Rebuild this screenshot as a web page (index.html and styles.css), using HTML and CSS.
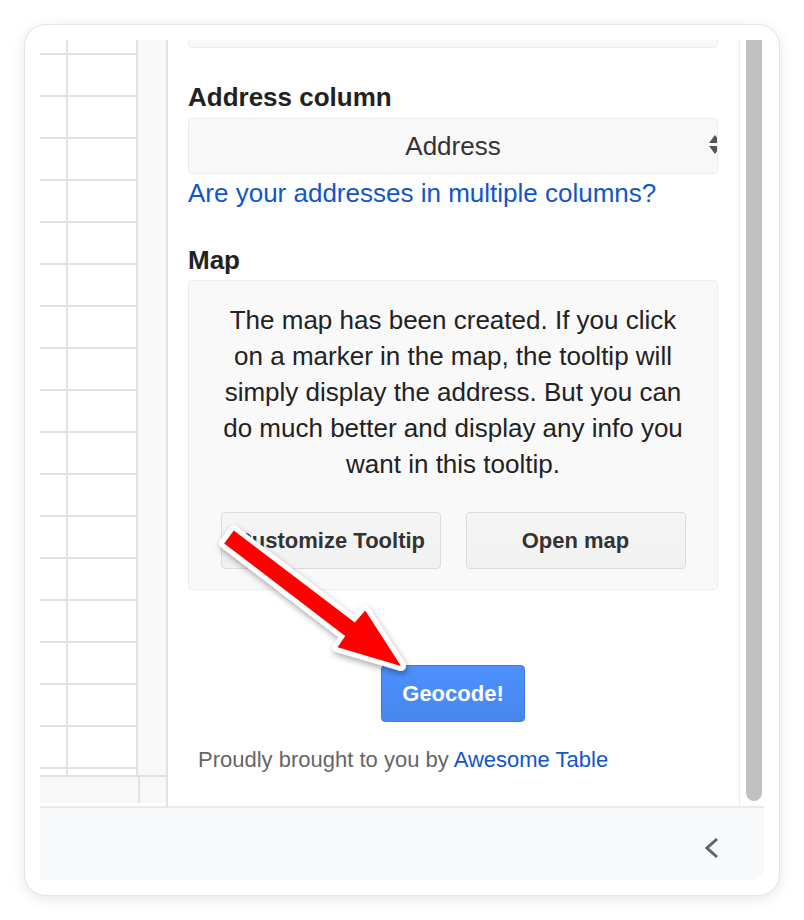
FILE: index.html
```html
<!DOCTYPE html>
<html>
<head>
<meta charset="utf-8">
<link rel="stylesheet" href="styles.css">
</head>
<body>
<div class="card">
  <div class="frame">
    <div class="main">
      <div class="sheet">
        <div class="sheet-top">
          <div class="cells"></div>
          <div class="vtrack"></div>
        </div>
        <div class="sheet-bottom">
          <div class="htrack"></div>
          <div class="corner"></div>
        </div>
      </div>
      <div class="sidebar">
        <div class="topbox"></div>
        <div class="section">
          <div class="label">Address column</div>
          <div class="select">
            <span>Address</span>
            <svg class="spin" width="12" height="22" viewBox="0 0 12 22"><path d="M6 0 L12 8 L0 8 Z M0 11 L12 11 L6 19 Z" fill="#555"/></svg>
          </div>
          <a class="link" href="#">Are your addresses in multiple columns?</a>
        </div>
        <div class="section">
          <div class="label label-map">Map</div>
          <div class="mapbox">
            <p class="info">The map has been created. If you click on a marker in the map, the tooltip will simply display the address. But you can do much better and display any info you want in this tooltip.</p>
            <div class="buttons">
              <button class="btn">Customize Tooltip</button>
              <button class="btn">Open map</button>
            </div>
          </div>
        </div>
        <div class="geo-row">
          <button class="btn btn-blue">Geocode!</button>
        </div>
        <div class="credit">Proudly brought to you by <a href="#">Awesome Table</a></div>
      </div>
      <div class="vscroll"><div class="thumb"></div></div>
    </div>
    <div class="footer">
      <svg class="chev" width="14" height="22" viewBox="0 0 14 22"><polyline points="12,2 2,11 12,20" fill="none" stroke="#5f6368" stroke-width="3"/></svg>
    </div>
  </div>
</div>
<svg class="arrow" width="804" height="920" viewBox="0 0 804 920">
  <defs>
    <filter id="sh" x="-20%" y="-20%" width="140%" height="140%">
      <feDropShadow dx="1" dy="3" stdDeviation="3" flood-color="#000" flood-opacity="0.35"/>
    </filter>
  </defs>
  <polygon filter="url(#sh)" points="233.8,530.6 354.8,622.4 365.2,610.4 401,666 337.6,647.2 345.2,636 224.2,543.4" fill="#ff0000" stroke="#ffffff" stroke-width="10" stroke-linejoin="round" paint-order="stroke"/>
</svg>
</body>
</html>
```
FILE: styles.css
```css
html, body {
  margin: 0;
  padding: 0;
  background: #ffffff;
}
body {
  font-family: "Liberation Sans", Arial, sans-serif;
  position: relative;
  width: 804px;
  height: 920px;
  overflow: hidden;
}
.card {
  margin: 24px 0 0 24px;
  width: 756px;
  height: 872px;
  box-sizing: border-box;
  border: 1px solid #e4e4e4;
  border-radius: 22px;
  padding: 15px;
  background: #fff;
  box-shadow: 0 3px 14px rgba(0, 0, 0, 0.10);
}
.frame {
  width: 724px;
  height: 840px;
  display: flex;
  flex-direction: column;
  overflow: hidden;
  border-bottom-right-radius: 12px;
}
.main {
  height: 766px;
  display: flex;
  flex: none;
}
.sheet {
  width: 126px;
  display: flex;
  flex-direction: column;
  flex: none;
}
.sheet-top {
  display: flex;
  height: 737px;
  border-bottom: 2px solid #e2e2e2;
  box-sizing: border-box;
}
.cells {
  width: 98px;
  border-right: 2px solid #e2e2e2;
  box-sizing: border-box;
  background:
    linear-gradient(to right, transparent 26px, #e2e2e2 26px 28px, transparent 28px),
    repeating-linear-gradient(to bottom, transparent 0 13px, #e2e2e2 13px 15px, transparent 15px 42px);
}
.vtrack {
  flex: 1;
  background: #f8f8f8;
}
.sheet-bottom {
  display: flex;
  height: 26px;
}
.htrack {
  width: 100px;
  background: #f8f8f8;
  border-right: 2px solid #e2e2e2;
  box-sizing: border-box;
}
.corner {
  flex: 1;
  background: #f8f8f8;
}
.sidebar {
  width: 573px;
  box-sizing: border-box;
  flex: none;
  border-left: 2px solid #e2e2e2;
  padding: 0 21px 0 20px;
  overflow: hidden;
}
.topbox {
  height: 56px;
  margin-top: -48px;
  box-sizing: border-box;
  border: 1px solid #ececec;
  border-radius: 4px;
  background: #f8f8f8;
}
.section {
  margin-top: 31px;
}
.label {
  font-size: 26px;
  line-height: 36px;
  font-weight: bold;
  color: #222;
  margin-bottom: 3px;
}
.label-map {
  margin-bottom: 2px;
}
.select {
  position: relative;
  height: 56px;
  box-sizing: border-box;
  border: 1px solid #ececec;
  border-radius: 4px;
  background: #f8f8f8;
  display: flex;
  align-items: center;
  justify-content: center;
  font-size: 26px;
  color: #333;
  overflow: hidden;
}
.spin {
  position: absolute;
  right: -4px;
  top: 16px;
}
.link {
  display: block;
  margin-top: 1px;
  font-size: 26px;
  line-height: 36px;
  color: #1155cc;
  text-decoration: none;
}
.mapbox {
  border: 1px solid #eeeeee;
  border-radius: 4px;
  background: #f9f9f9;
  padding: 21px 25px 20px;
}
.info {
  margin: 0;
  font-size: 26px;
  line-height: 36px;
  color: #222;
  text-align: center;
}
.buttons {
  display: flex;
  justify-content: center;
  gap: 25px;
  margin-top: 30px;
}
.btn {
  height: 57px;
  box-sizing: border-box;
  border: 1px solid #dcdcdc;
  border-radius: 4px;
  background: linear-gradient(#f5f5f5, #f1f1f1);
  color: #333;
  font-family: "Liberation Sans", Arial, sans-serif;
  font-size: 22px;
  font-weight: bold;
  padding: 0;
  white-space: nowrap;
}
.buttons .btn {
  width: 220px;
}
.geo-row {
  display: flex;
  justify-content: center;
  margin-top: 75px;
}
.btn-blue {
  width: 144px;
  background: linear-gradient(#4d90fe, #4787ed);
  border-color: #3b7ee9;
  color: #fff;
}
.credit {
  margin-top: 22px;
  padding-left: 10px;
  font-size: 22px;
  line-height: 32px;
  color: #666;
}
.credit a {
  color: #1155cc;
  text-decoration: none;
}
.vscroll {
  width: 25px;
  flex: none;
  box-sizing: border-box;
  border-left: 1px solid #ececec;
  padding: 0 2px 0 6px;
}
.thumb {
  height: 761px;
  background: #c1c1c1;
  border-radius: 0 0 8px 8px;
}
.footer {
  flex: 1;
  border-top: 2px solid #e8eaed;
  background: #f8f9fa;
  display: flex;
  justify-content: flex-end;
  align-items: center;
  padding: 7px 45px 0 0;
}
.arrow {
  position: absolute;
  left: 0;
  top: 0;
  pointer-events: none;
}
```
